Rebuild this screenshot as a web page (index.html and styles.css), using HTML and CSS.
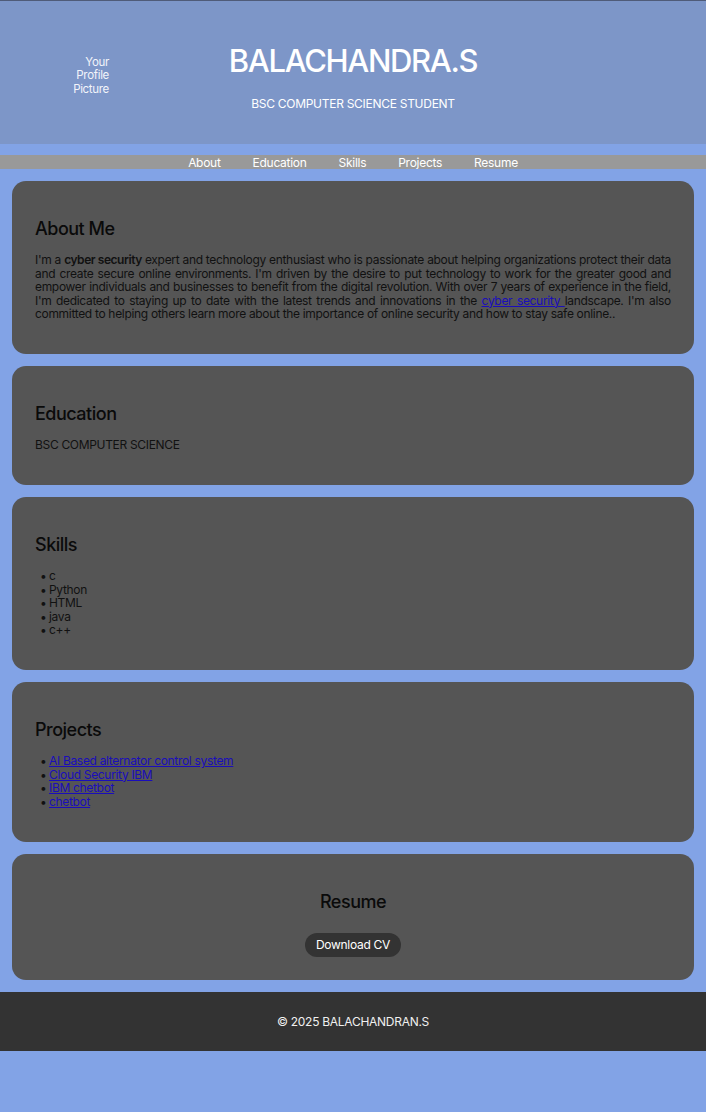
FILE: index.html
```html
<!DOCTYPE html>
<html lang="en">
<head>
<meta charset="utf-8">
<title>BALACHANDRA.S</title>
<link rel="stylesheet" href="styles.css">
</head>
<body>
<header class="hero">
  <div class="avatar">Your Profile Picture</div>
  <div class="hero-text">
    <h1 class="name">BALACHANDRA.S</h1>
    <p class="tagline">BSC COMPUTER SCIENCE STUDENT</p>
  </div>
  <div></div>
</header>
<nav class="nav">
  <a href="#about">About</a>
  <a href="#education">Education</a>
  <a href="#skills">Skills</a>
  <a href="#projects">Projects</a>
  <a href="#resume">Resume</a>
</nav>
<main>
  <section class="card" id="about">
    <h2>About Me</h2>
    <p class="justify">I'm a <b>cyber security</b> expert and technology enthusiast who is passionate about helping organizations protect their data and create secure online environments. I'm driven by the desire to put technology to work for the greater good and empower individuals and businesses to benefit from the digital revolution. With over 7 years of experience in the field, I'm dedicated to staying up to date with the latest trends and innovations in the <a href="#">cyber security </a>landscape. I'm also committed to helping others learn more about the importance of online security and how to stay safe online..</p>
  </section>
  <section class="card" id="education">
    <h2>Education</h2>
    <p>BSC COMPUTER SCIENCE</p>
  </section>
  <section class="card" id="skills">
    <h2>Skills</h2>
    <ul class="list">
      <li>c</li>
      <li>Python</li>
      <li>HTML</li>
      <li>java</li>
      <li>c++</li>
    </ul>
  </section>
  <section class="card" id="projects">
    <h2>Projects</h2>
    <ul class="list">
      <li><a href="#">AI Based alternator control system</a></li>
      <li><a href="#">Cloud Security IBM</a></li>
      <li><a href="#">IBM chetbot</a></li>
      <li><a href="#">chetbot</a></li>
    </ul>
  </section>
  <section class="card center" id="resume">
    <h2>Resume</h2>
    <div class="cv"><a class="btn" href="#">Download CV</a></div>
  </section>
</main>
<footer class="footer">© 2025 BALACHANDRAN.S</footer>
</body>
</html>
```
FILE: styles.css
```css
*, *::before, *::after { box-sizing: border-box; }
html, body {
  margin: 0;
  background: #82a3e6;
  font-family: Inter, "Noto Sans", sans-serif;
  font-size: 12px;
  line-height: 13.5px;
  letter-spacing: -0.32px;
  color: #111;
}
.hero {
  background: #7d96c8;
  border-top: 1px solid #4f5b78;
  height: 144px;
  padding-top: 7px;
  display: grid;
  grid-template-columns: 1fr auto 1fr;
  align-items: center;
  color: #fff;
}
.avatar {
  justify-self: start;
  margin-left: 69px;
  width: 40px;
  text-align: right;
  font-size: 11.5px;
  line-height: 13.5px;
  color: #f2f4fa;
}
.hero-text { text-align: center; }
.name {
  margin: 0;
  font-size: 31px;
  line-height: 39px;
  font-weight: 500;
  letter-spacing: -1.35px;
}
.tagline {
  margin: 17px 0 0;
  font-size: 12px;
  line-height: 13.5px;
  letter-spacing: -0.28px;
}
.nav {
  margin-top: 11px;
  background: #999;
  height: 14px;
  display: flex;
  justify-content: center;
  gap: 32px;
  line-height: 15px;
}
.nav a {
  color: #fff;
  text-decoration: none;
  font-size: 12px;
  letter-spacing: -0.28px;
}
main {
  padding: 12px 12px;
  display: flex;
  flex-direction: column;
  gap: 12px;
}
.card {
  background: #555;
  border-radius: 14px;
  padding: 20px 23px 20.5px;
}
.card h2 {
  margin: 17px 0 13px;
  font-size: 18px;
  line-height: 22px;
  font-weight: 500;
  letter-spacing: -0.5px;
  color: #0a0a0a;
}
.card p { margin: 13px 0; }
.card h2 + p { margin-top: 0; }
.card b { font-weight: 600; letter-spacing: -0.45px; }
.justify { text-align: justify; }
.list {
  margin: 13px 0;
  padding: 0;
  list-style: none;
}
.card h2 + .list { margin-top: 0; }
.list li { display: flex; }
.list li::before {
  content: "•";
  width: 14px;
  padding-left: 5px;
  text-align: left;
  flex: none;
}
.card a { color: #1a0dbb; }
.center { text-align: center; }
.cv { margin: 20px 0 3px; }
.card .btn {
  display: inline-block;
  background: #333;
  color: #fff;
  text-decoration: none;
  border-radius: 12px;
  padding: 5px 11px;
  line-height: 14px;
  font-size: 12px;
  letter-spacing: -0.28px;
}
.footer {
  background: #333;
  color: #f0f0f0;
  height: 59px;
  display: flex;
  align-items: center;
  justify-content: center;
  font-size: 12px;
  letter-spacing: -0.28px;
}
```
